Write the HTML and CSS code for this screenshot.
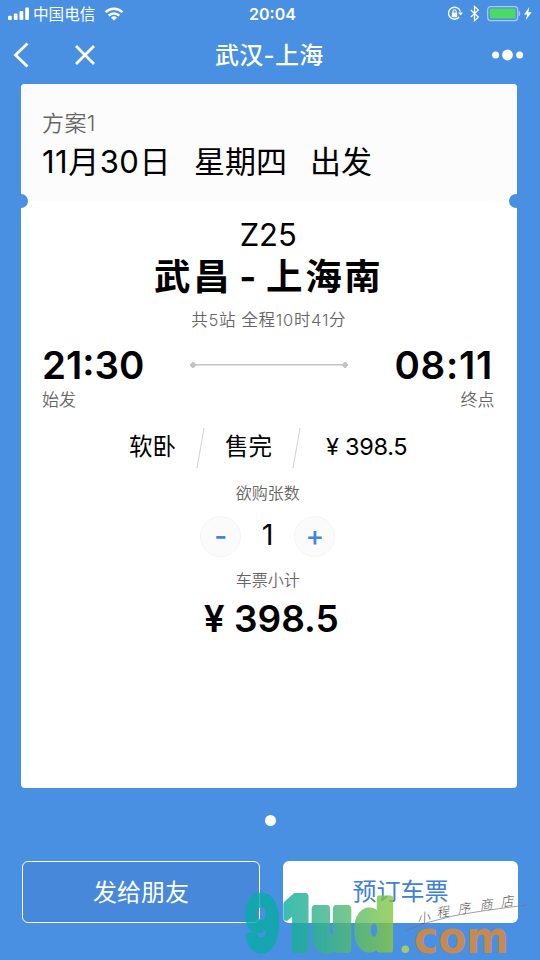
FILE: index.html
```
<!DOCTYPE html>
<html lang="zh-CN">
<head>
<meta charset="utf-8">
<title>武汉-上海</title>
<link rel="stylesheet" href="styles.css">
</head>
<body>
<div class="screen">
  <header class="status">
    <svg class="signal" width="22" height="14" viewBox="0 0 22 14" fill="#fff"><rect x="0" y="8.8" width="3.8" height="4.2" rx="1"/><rect x="5.8" y="6.6" width="3.8" height="6.4" rx="1"/><rect x="11.5" y="4" width="3.8" height="9" rx="1"/><rect x="17.2" y="0.5" width="3.8" height="12.5" rx="1"/></svg>
    <span class="carrier">中国电信</span>
    <svg class="wifi" width="20" height="14" viewBox="0 0 20 14" fill="none" stroke="#fff" stroke-width="2.5"><path d="M1.6 5.2a12 12 0 0 1 16.8 0M4.7 8.6a7.6 7.6 0 0 1 10.6 0"/><path d="M10 13.6 7 10.7a4.3 4.3 0 0 1 6 0Z" fill="#fff" stroke="none"/></svg>
    <span class="clock">20:04</span>
    <svg class="tray" width="88" height="18" viewBox="0 0 88 18" fill="none" stroke="#fff"><path d="M13.3 7.6A6 6 0 1 0 12.2 13" stroke-width="1.4"/><path d="M11 8.4h5l-2.4 3.2Z" fill="#fff" stroke="none"/><rect x="4.8" y="8.6" width="5.4" height="4.6" rx=".5" fill="#fff" stroke="none"/><path d="M5.9 8.8V7.4a1.6 1.6 0 0 1 3.2 0v1.4" stroke-width="1.1"/><path d="m23.8 6.1 7.5 7-3.8 3.6V2.4l3.8 3.5-7.5 7.1" stroke-width="1.3"/><rect x="40.7" y="2.6" width="30" height="14" rx="3" stroke="#a9cbf2" stroke-width="1.2"/><rect x="42.8" y="4.6" width="25.8" height="10" rx="1" fill="#4cd964" stroke="none"/><path d="M72 7.2q1.8 2.2 0 4.8Z" fill="#a9cbf2" stroke="#a9cbf2" stroke-width=".7"/><path d="m82.4 3-5.4 7.4h3.2L78.8 16l5.9-7.8h-3.4Z" fill="#fff" stroke="none"/></svg>
  </header>
  <nav class="nav">
    <svg class="back" width="16" height="28" viewBox="0 0 16 28" fill="none" stroke="#fff" stroke-width="2.8"><path d="M14.5 2.5 2.5 14l12 11.5"/></svg>
    <svg class="close" width="22" height="22" viewBox="0 0 22 22" stroke="#fff" stroke-width="2.7"><path d="m2 2 18 18M20 2 2 20"/></svg>
    <h1>武汉-上海</h1>
    <svg class="more" width="32" height="12" viewBox="0 0 32 12" fill="#fff"><circle cx="3.6" cy="6" r="3.5"/><circle cx="15.5" cy="6" r="5.4"/><circle cx="27.6" cy="6" r="3.5"/></svg>
  </nav>
  <main class="card">
    <section class="plan">
      <div class="plan-name">方案1</div>
      <div class="plan-date"><span class="day">11月30日</span><span>星期四</span><span>出发</span></div>
      <i class="notch notch-left"></i><i class="notch notch-right"></i>
    </section>
    <section class="trip">
      <div class="train">Z25</div>
      <h2 class="route">武昌 - 上海南</h2>
      <div class="meta">共5站 全程10时41分</div>
      <div class="times"><b>21:30</b><span class="track"></span><b>08:11</b></div>
      <div class="ends"><span>始发</span><span>终点</span></div>
      <div class="seat">
        <span class="seat-type">软卧</span><i class="slash"></i><span class="seat-left">售完</span><i class="slash"></i><span class="seat-price">¥ 398.5</span>
      </div>
      <div class="label">欲购张数</div>
      <div class="stepper">
        <button>-</button><span class="count">1</span><button>+</button>
      </div>
      <div class="label total-label">车票小计</div>
      <div class="total">¥ 398.5</div>
    </section>
  </main>
  <div class="pager"></div>
  <footer class="actions">
    <button class="send">发给朋友</button>
    <button class="book">预订车票</button>
  </footer>
  <svg class="mark" width="300" height="80" viewBox="240 880 300 80">
    <defs>
      <linearGradient id="tint" gradientUnits="userSpaceOnUse" x1="243" y1="0" x2="395" y2="0"><stop offset="0" stop-color="#0aacaa"/><stop offset=".25" stop-color="#08aba0"/><stop offset=".55" stop-color="#3bb488"/><stop offset="1" stop-color="#8ac83f"/></linearGradient>
      <mask id="word" maskUnits="userSpaceOnUse" x="240" y="880" width="300" height="80">
        <g class="word">
          <text class="nine" x="244" y="951" textLength="36" lengthAdjust="spacingAndGlyphs" font-size="77">9</text>
          <text x="284" y="949" textLength="24" lengthAdjust="spacingAndGlyphs" font-size="72">1</text>
          <text x="312" y="949" textLength="39" lengthAdjust="spacingAndGlyphs" font-size="74">u</text>
          <text class="dee" x="354.5" y="950" textLength="39.5" lengthAdjust="spacingAndGlyphs" font-size="72">d</text>
        </g>
      </mask>
    </defs>
    <rect x="240" y="880" width="160" height="80" fill="url(#tint)" opacity=".8" mask="url(#word)"/>
    <circle cx="405.3" cy="949.3" r="3.8" fill="#a4c86e"/>
    <text class="com" x="414" y="952.5" textLength="95" lengthAdjust="spacingAndGlyphs">com</text>
    <g class="script"><text transform="translate(418 924) rotate(-12)">小</text><text transform="translate(437 918) rotate(-10)">程</text><text transform="translate(458 914) rotate(-8)">序</text><text transform="translate(480 910) rotate(-6)">商</text><text transform="translate(501 907) rotate(-8)">店</text></g>
    <path d="M405 931Q428 921 453 916T527 905" fill="none" stroke="#777" stroke-width=".7"/>
  </svg>
</div>
</body>
</html>
```
FILE: styles.css
```
* { box-sizing: border-box; }
body { margin: 0; font-family: Inter, "Noto Sans CJK SC", sans-serif; color: #000; }
h1, h2 { margin: 0; }
button { font-family: inherit; padding: 0; border: 0; }
svg { display: block; flex: none; }
.screen { position: relative; width: 540px; height: 960px; background: #4990e2; overflow: hidden; display: flex; flex-direction: column; }
.status { height: 27px; display: flex; align-items: center; padding-left: 8px; color: #fff; flex: none; }
.carrier { font-size: 15.6px; margin-left: 3px; width: 64px; line-height: 27px; padding-top: 1px; white-space: nowrap; }
.wifi { margin-left: 7px; }
.clock { margin-left: 125px; width: 50px; font-size: 16px; font-weight: 600; }
.tray { margin-left: 148px; margin-top: -1px; }
.nav { height: 56px; display: flex; align-items: center; color: #fff; padding-left: 13px; flex: none; }
.close { margin-left: 45px; }
.nav h1 { margin-left: 119px; width: 110px; font-size: 24px; font-weight: 500; line-height: 36px; padding-top: 2px; letter-spacing: .3px; white-space: nowrap; }
.more { margin-left: 167px; }
.card { margin: .5px 0 0 21px; width: 495.5px; height: 704px; border-radius: 4px; background: #fff; flex: none; }
.plan { position: relative; height: 117.5px; background: #fcfcfc; border-radius: 4px 4px 0 0; padding: 24px 21px 0; }
.plan-name { font-size: 22px; line-height: 30px; color: #666; font-weight: 350; letter-spacing: .4px; }
.plan-date { display: flex; gap: 23px; font-size: 31px; line-height: 48px; white-space: nowrap; font-weight: 380; }
.day { letter-spacing: .5px; }
.notch { position: absolute; width: 14px; height: 14px; bottom: -7px; border-radius: 50%; background: #4990e2; }
.notch-left { left: -7px; }
.notch-right { right: -6.5px; }
.trip { padding: 15px 21px 0; text-align: center; }
.train { font-size: 31px; line-height: 38px; padding-right: 1px; }
.route { font-size: 36.5px; line-height: 44px; padding-top: 1px; letter-spacing: 2.6px; word-spacing: -4.2px; font-weight: 700; white-space: nowrap; }
.meta { font-size: 16.5px; line-height: 42px; color: #666; font-weight: 350; letter-spacing: .7px; }
.times { display: flex; justify-content: space-between; align-items: center; height: 48px; }
.times b { font-size: 38.5px; font-weight: 600; width: 102px; white-space: nowrap; text-align: left; }
.times b:last-child { letter-spacing: .7px; padding-left: 1px; }
.track { width: 158px; height: 6px; background: radial-gradient(circle at 3px 3px, #c4c4c4 2.6px, transparent 3px), radial-gradient(circle at 155px 3px, #c4c4c4 2.6px, transparent 3px), linear-gradient(#c4c4c4, #c4c4c4) 3px 2px / 152px 1.5px no-repeat; }
.ends { display: flex; justify-content: space-between; font-size: 17px; line-height: 22px; color: #666; font-weight: 350; padding-right: 1px; }
.seat { display: flex; align-items: center; height: 40px; margin-top: 17px; padding: 0 0 0 87px; font-size: 23.5px; line-height: 38px; white-space: nowrap; }
.seat span { padding-bottom: 2px; }
.slash { width: 1px; height: 40px; background: #d2d2d2; transform: skewX(-10deg); }
.seat-type { width: 71px; text-align: left; }
.seat-left { width: 95px; }
.seat-price { margin-left: 29px; letter-spacing: -.3px; }
.label { font-size: 16px; line-height: 32px; margin-top: 9px; padding-right: 2px; color: #666; font-weight: 350; }
.stepper { display: flex; justify-content: center; align-items: center; margin-top: 7px; height: 40px; padding-right: 2px; }
.stepper button { width: 41px; height: 41px; border-radius: 50%; border: 1px solid #f5f5f5; background: #fbfbfb; color: #4386dc; font-size: 28px; font-weight: 500; line-height: 38px; }
.count { width: 53px; font-size: 29px; line-height: 38px; padding-bottom: 2px; }
.total-label { margin-top: 8px; }
.total { font-size: 37px; font-weight: 600; line-height: 46px; padding-left: 5px; }
.pager { width: 11px; height: 11px; border-radius: 50%; background: #fff; margin: 27px 0 0 264.5px; flex: none; }
.actions { display: flex; gap: 23px; margin: 35px 0 0 22px; flex: none; }
.actions button { width: 238px; height: 62.5px; border-radius: 6px; font-size: 24px; font-weight: 400; padding-bottom: 2px; }
.actions .send { background: #4788da; border: 1.5px solid #fff; color: #fff; }
.actions .book { width: 235px; background: #fff; color: #3f80d8; padding-bottom: 4px; }
.mark { position: absolute; left: 240px; top: 880px; }
.word { font-family: Inter, sans-serif; font-weight: 900; fill: #fff; stroke: #fff; stroke-width: 8; stroke-linejoin: round; }
.nine { stroke-width: 3; }
.dee { stroke-width: 5; }
.com { font-family: "DejaVu Sans", sans-serif; font-weight: 700; font-size: 44px; fill: #c68a50; }
.script { font-family: "Noto Sans CJK SC", sans-serif; font-size: 13px; font-weight: 300; font-style: italic; fill: #555; }
```
